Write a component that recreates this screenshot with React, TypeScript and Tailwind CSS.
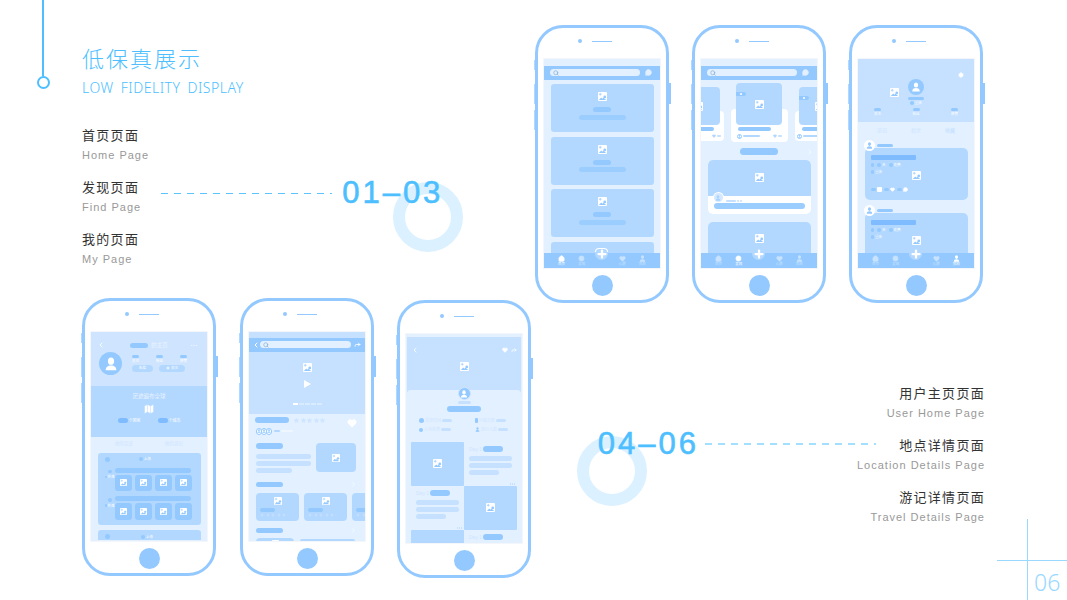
import * as React from 'react';
import { ChevronLeft, ChevronRight, Compass, Forward, Heart, House, Map as MapIcon, MessageCircle, Plus, Search, Settings, Star } from 'lucide-react';

type NodeProps = { readonly children?: React.ReactNode };

function ImageIcon({ size = 9 }: { readonly size?: number }) {
  return (
    <svg width={size} height={size} viewBox="0 0 10 10" className="shrink-0">
      <rect width="10" height="10" rx="1" fill="#fff" />
      <path d="M2.5 1v3M1 2.5h3" stroke="#a9d3ff" strokeWidth="1" />
      <path d="M1 9l2.5-3L5 7.5l1-1.5 3 3z" fill="#93c9ff" />
      <circle cx="7.5" cy="5.5" r="1.5" fill="#93c9ff" />
    </svg>
  );
}

function Person({ size = 10, color = '#fff' }: { readonly size?: number; readonly color?: string }) {
  return (
    <svg width={size} height={size} viewBox="0 0 10 10" className="shrink-0">
      <ellipse cx="5" cy="3" rx="2.2" ry="2.6" fill={color} />
      <path d="M1.2 9.5c0-2.500 1.500-3.500 3.800-3.500s3.800 1 3.800 3.500z" fill={color} />
    </svg>
  );
}

function Stars({ color, size = 5 }: { readonly color: string; readonly size?: number }) {
  return (
    <div className="flex gap-[1.5px]">
      {[0, 1, 2, 3, 4].map(i => (
        <Star key={i} size={size} color={color} fill={color} />
      ))}
    </div>
  );
}

function SearchPill({ className }: { readonly className: string }) {
  return (
    <div className={`flex h-[7px] items-center rounded-full bg-[#e3f0ff] pl-[3px] ${className}`}>
      <Search size={6} color="#7fa9d0" strokeWidth={2.5} />
    </div>
  );
}

function TabBar({ active, bracket }: { readonly active: number; readonly bracket?: boolean }) {
  const tabs = [
    { label: '首页', icon: <House size={7} fill="currentColor" strokeWidth={2} /> },
    { label: '发现', icon: <Compass size={7} fill="currentColor" strokeWidth={1} stroke="#93c9ff" /> },
    { label: '', icon: null },
    { label: '心愿', icon: <Heart size={7} fill="currentColor" strokeWidth={1} /> },
    { label: '我的', icon: <Person size={7} color="currentColor" /> },
  ];
  return (
    <div className="relative flex h-[15px] shrink-0 bg-[#93c9ff] px-[7.5px] pt-[2px]">
      {tabs.map((tab, i) => (
        <div key={tab.label || 'plus'} className={`flex w-[20.2px] flex-col items-center ${active === i ? 'text-white' : 'text-[#c9e3ff]'}`}>
          {tab.icon}
          <span className="text-[3.5px] leading-[5px]">{tab.label}</span>
        </div>
      ))}
      <div className="absolute top-[-6px] left-[51px] flex h-[13px] w-[13px] items-center justify-center rounded-full bg-[#b3d8ff]">
        <Plus size={12} color="#fff" strokeWidth={4.5} />
      </div>
      {bracket && <div className="absolute top-[-5.5px] left-[51px] h-[4px] w-[13px] rounded-t-[4px] border-x border-t border-white" />}
    </div>
  );
}

function Screen({ children, tabs, bracket }: NodeProps & { readonly tabs?: number; readonly bracket?: boolean }) {
  return (
    <div className="mt-[15px] flex h-[211px] w-[118px] flex-col overflow-hidden border border-[#f3f7fb] bg-[#e3f0ff]">
      <div className="min-h-0 flex-1 overflow-hidden">{children}</div>
      {tabs !== undefined && <TabBar active={tabs} bracket={bracket} />}
    </div>
  );
}

function Phone({ children, className = '' }: NodeProps & { readonly className?: string }) {
  return (
    <div className={`relative flex h-[278px] w-[134px] shrink-0 flex-col items-center rounded-[28px] border-[3px] border-[#93c9ff] bg-white ${className}`}>
      <div className="absolute top-[32px] left-[-4.5px] h-[10px] w-[1.5px] bg-[#b3d8ff]" />
      <div className="absolute top-[56px] left-[-4.5px] h-[20px] w-[1.5px] bg-[#b3d8ff]" />
      <div className="absolute top-[82px] left-[-4.5px] h-[20px] w-[1.5px] bg-[#b3d8ff]" />
      <div className="absolute top-[55px] right-[-4.5px] h-[21px] w-[1.5px] bg-[#93c9ff]" />
      <div className="relative mt-[11px] flex h-[4px] items-center">
        <div className="absolute left-[-14px] h-[4px] w-[4px] rounded-full bg-[#93c9ff]" />
        <div className="h-px w-[20px] bg-[#93c9ff]" />
      </div>
      {children}
      <div className="mt-[5.5px] h-[21px] w-[21px] rounded-full bg-[#93c9ff]" />
    </div>
  );
}

function HomeCard() {
  return (
    <div className="flex h-[48px] w-[103px] shrink-0 flex-col items-center rounded-[3px] bg-[#b3d8ff] pt-[8px]">
      <ImageIcon />
      <div className="mt-[6px] h-[5px] w-[18px] rounded-full bg-[#93c9ff]" />
      <div className="mt-[2.5px] h-[5px] w-[47px] rounded-full bg-[#9ccdff]" />
    </div>
  );
}

function HomeScreen() {
  return (
    <Screen tabs={0} bracket>
      <div className="h-[7px]" />
      <div className="flex h-[13.5px] items-center gap-[5px] bg-[#93c9ff] pl-[6px]">
        <SearchPill className="w-[90px]" />
        <MessageCircle size={7} color="#e3f0ff" fill="#e3f0ff" />
      </div>
      <div className="flex flex-col items-center gap-[4.5px] pt-[4.5px]">
        <HomeCard />
        <HomeCard />
        <HomeCard />
        <HomeCard />
      </div>
    </Screen>
  );
}

function SpotCard({ wide }: { readonly wide?: boolean }) {
  return (
    <div className={`relative flex shrink-0 flex-col items-center rounded-[4px] ${wide ? 'h-[59px] w-[57px]' : 'mt-[4px] h-[54px] w-[50px]'}`}>
      <div className={`absolute inset-x-0 bottom-0 rounded-[4px] bg-white ${wide ? 'top-[26px]' : 'top-[24px]'}`} />
      <div className={`relative flex items-center justify-center rounded-[4px] bg-[#b3d8ff] ${wide ? 'h-[42px] w-[46px]' : 'h-[38px] w-[42px]'}`}>
        <ImageIcon />
        <div className="absolute top-[9px] left-0 flex h-[4px] w-[10px] items-center justify-center rounded-r-full bg-[#93c9ff]">
          <div className="h-[2px] w-[2px] rounded-full bg-white" />
        </div>
      </div>
      <div className="relative mt-[2px] ml-[7px] h-[4px] w-[33px] self-start rounded-full bg-[#93c9ff]" />
      <div className="relative mt-[2.5px] flex w-[45px] items-center">
        <div className="flex h-[5px] w-[5px] items-center justify-center rounded-full border-[0.5px] border-[#93c9ff]">
          <Person size={3} color="#93c9ff" />
        </div>
        <div className="ml-[1px] h-[2px] w-[17px] rounded-full bg-[#b3d8ff]" />
        <Heart size={4} color="#b3d8ff" fill="#b3d8ff" className="ml-auto" />
        <div className="ml-[1px] h-[2px] w-[4px] rounded-full bg-[#c5e1ff]" />
      </div>
    </div>
  );
}

function FindScreen() {
  return (
    <Screen tabs={1}>
      <div className="h-[7px]" />
      <div className="flex h-[13.5px] items-center gap-[5px] bg-[#93c9ff] pl-[6px]">
        <SearchPill className="w-[90px]" />
        <MessageCircle size={7} color="#e3f0ff" fill="#e3f0ff" />
      </div>
      <div className="flex justify-center gap-[7px] pt-[3.5px]">
        <SpotCard />
        <SpotCard wide />
        <SpotCard />
      </div>
      <div className="relative mt-[6px] flex justify-center">
        <div className="h-[7px] w-[38px] rounded-full bg-[#93c9ff]" />
        <ChevronRight size={8} color="#fff" strokeWidth={2} className="absolute top-0 right-[3px]" />
      </div>
      <div className="mx-auto mt-[5px] h-[54px] w-[103px] overflow-hidden rounded-[5px] bg-white">
        <div className="flex h-[36px] items-start justify-center bg-[#b3d8ff] pt-[13px]">
          <ImageIcon />
        </div>
        <div className="relative px-[6px]">
          <div className="absolute top-[-4px] left-[5px] flex h-[11px] w-[11px] items-center justify-center rounded-full bg-white">
            <div className="flex h-[9px] w-[9px] items-center justify-center rounded-full bg-[#d4e9ff]">
              <Person size={6} color="#a9d3ff" />
            </div>
          </div>
          <div className="ml-[12px] flex h-[9px] items-center gap-[1px] pt-[1px]">
            <div className="h-[2px] w-[10px] rounded-full bg-[#c5e1ff]" />
            <div className="h-[2px] w-[2px] rounded-full bg-[#c5e1ff]" />
            <div className="h-[2px] w-[2px] rounded-full bg-[#c5e1ff]" />
          </div>
          <div className="mt-[-2px] h-[5.5px] rounded-full bg-[#9ccdff]" />
        </div>
      </div>
      <div className="mx-auto mt-[8px] flex h-[54px] w-[103px] justify-center rounded-[5px] bg-[#b3d8ff] pt-[12px]">
        <ImageIcon />
      </div>
    </Screen>
  );
}

function Tag({ text, wide }: { readonly text: string; readonly wide?: boolean }) {
  return (
    <div className="flex items-center gap-[1px]">
      <div className={`h-[3.5px] rounded-full bg-[#93c9ff] ${wide ? 'w-[4px]' : 'w-[3.5px]'}`} />
      {text && <span className="text-[3.5px] leading-[4px] text-white">{text}</span>}
    </div>
  );
}

function JournalCard({ withIcons }: { readonly withIcons?: boolean }) {
  return (
    <div className="relative mt-[-3px] shrink-0 pt-[3px]">
      <div className="relative z-10 ml-[6px] flex h-[11px] items-center gap-[2px]">
        <div className="flex h-[11px] w-[11px] items-center justify-center rounded-full bg-white">
          <Person size={7} color="#93c9ff" />
        </div>
        <div className="mb-[1px] h-[3px] w-[16px] rounded-full bg-[#93c9ff]" />
      </div>
      <div className="mx-auto mt-[-3px] flex h-[52px] w-[103px] flex-col rounded-[5px] bg-[#b3d8ff] px-[6px] pt-[7px]">
        <div className="h-[5px] w-[45px] rounded-[1px] bg-[#7ebcff]" />
        <div className="mt-[3px] flex items-center gap-[3px]">
          <Tag text="" />
          <Tag text="天" wide />
          <Tag text="花费" wide />
        </div>
        <div className="mt-[3px] flex items-center justify-between pr-[52px]">
          <Tag text="重庆" />
        </div>
        <div className="mt-[-3px] ml-[41px] w-fit">
          <ImageIcon />
        </div>
        {withIcons && (
          <div className="mt-[7px] flex items-center gap-[1px]">
            <div className="h-[3px] w-[5px] rounded-full bg-[#93c9ff]" />
            <div className="h-[5px] w-[5px] rounded-[1px] bg-white" />
            <div className="ml-[1px] h-[3px] w-[5px] rounded-full bg-[#93c9ff]" />
            <Heart size={5} color="#fff" fill="#fff" />
            <div className="ml-[1px] h-[3px] w-[5px] rounded-full bg-[#93c9ff]" />
            <MessageCircle size={5} color="#fff" fill="#fff" />
          </div>
        )}
      </div>
    </div>
  );
}

function Stat({ label, className = 'w-[7px]' }: { readonly label: string; readonly className?: string }) {
  return (
    <div className="flex flex-col items-center">
      <div className={`h-[3px] rounded-full bg-[#93c9ff] ${className}`} />
      <span className="mt-[1px] text-[3.5px] leading-[4px] text-white">{label}</span>
    </div>
  );
}

function MyScreen() {
  return (
    <Screen tabs={4}>
      <div className="relative flex h-[63px] flex-col items-center bg-[#c5e1ff] pt-[20px]">
        <Settings size={6} color="#fff" fill="#fff" className="absolute top-[13px] right-[10px]" />
        <div className="absolute top-[29px] left-[32px]">
          <ImageIcon />
        </div>
        <div className="flex h-[16px] w-[16px] items-center justify-center rounded-full bg-[#93c9ff]">
          <Person size={10} />
        </div>
        <div className="mt-[2px] h-[3px] w-[16px] rounded-full bg-[#93c9ff]" />
        <div className="mt-[1px]">
          <Tag text="重庆" />
        </div>
        <div className="mt-[3px] flex w-[84px] justify-between">
          <Stat label="关注" />
          <Stat label="粉丝" />
          <Stat label="获赞" />
        </div>
      </div>
      <div className="flex h-[18px] items-center justify-center gap-[24px] text-[5px] text-[#cfe5ff]">
        <span>游记</span>
        <span>相关</span>
        <span className="text-[#bcdcff]">收藏</span>
      </div>
      <JournalCard withIcons />
      <div className="h-[5px]" />
      <JournalCard />
    </Screen>
  );
}

function TimelineRow() {
  return (
    <div className="flex">
      <div className="flex w-[16px] shrink-0 flex-col items-end pt-[2px]">
        <div className="mr-[3px] h-[3.5px] w-[3.5px] rounded-full bg-[#93c9ff]" />
        <div className="mt-[2px] flex items-center gap-[0.5px]">
          <div className="h-[2.5px] w-[2.5px] rounded-full bg-[#93c9ff]" />
          <span className="text-[3.5px] leading-[4px] text-white">外滩</span>
        </div>
      </div>
      <div className="ml-[0.5px] flex flex-col gap-[2px]">
        <div className="h-[5px] w-[76px] rounded-full bg-[#93c9ff]" />
        <div className="flex gap-[3px]">
          {[0, 1, 2, 3].map(i => (
            <div key={i} className="flex h-[16.5px] w-[17px] items-center justify-center rounded-[3px] bg-[#93c9ff]">
              <ImageIcon size={7} />
            </div>
          ))}
        </div>
      </div>
    </div>
  );
}

function UserScreen() {
  return (
    <Screen>
      <div className="h-[53.5px] bg-[#cfe5ff] px-[8px] pt-[9px]">
        <div className="relative flex h-[8px] items-center justify-center text-white">
          <ChevronLeft size={8} strokeWidth={2.5} className="absolute left-[-2px]" />
          <div className="h-[5px] w-[18px] rounded-full bg-[#93c9ff]" />
          <span className="ml-[3px] text-[5.5px] leading-[6px] text-[#e8f3ff]">的主页</span>
          <span className="absolute right-[1px] text-[6px] leading-[4px] font-bold tracking-[0.5px]">···</span>
        </div>
        <div className="mt-[3px] flex items-center">
          <div className="flex h-[23px] w-[23px] items-center justify-center rounded-full bg-[#93c9ff]">
            <Person size={14} />
          </div>
          <div className="ml-[10px] flex flex-col gap-[1.5px]">
            <div className="flex w-[55px] justify-between">
              <Stat label="关注" />
              <Stat label="粉丝" />
              <Stat label="获赞" />
            </div>
            <div className="flex gap-[6px] text-[3.5px] text-white">
              <div className="flex h-[7px] w-[21px] items-center justify-center rounded-full bg-[#b3d8ff]">私信</div>
              <div className="flex h-[7px] w-[26px] items-center justify-center gap-[1px] rounded-full bg-[#b3d8ff]">
                <Plus size={4} strokeWidth={5} />
                关注
              </div>
            </div>
          </div>
        </div>
      </div>
      <div className="flex h-[51px] flex-col items-center bg-[#b3d8ff] pt-[6px]">
        <span className="text-[5.5px] leading-[8px] text-[#e8f3ff]">足迹遍布全球</span>
        <MapIcon size={12} color="#b3d8ff" fill="#fff" strokeWidth={1} className="mt-[3px]" />
        <div className="mt-[3px] flex gap-[17px] text-[4px] leading-[5px] text-white">
          <div className="flex items-center gap-[1px]">
            <div className="h-[5px] w-[10px] rounded-full bg-[#7ebcff]" />
            个国家
          </div>
          <div className="flex items-center gap-[1px]">
            <div className="h-[5px] w-[10px] rounded-full bg-[#7ebcff]" />
            个城市
          </div>
        </div>
      </div>
      <div className="flex h-[16px] items-center justify-center gap-[32px] text-[4.5px] text-[#cfe5ff]">
        <span>她的足迹</span>
        <span>她的游记</span>
      </div>
      <div className="mx-auto flex h-[72px] w-[103px] flex-col gap-[2px] rounded-[3px] bg-[#b3d8ff] pr-[5px] pl-[1px]">
        <div className="relative flex h-[13px] items-center justify-center pr-[4px]">
          <div className="absolute left-[6px] h-[5px] w-[5px] rounded-full bg-[#93c9ff]" />
          <Tag text="上海" />
        </div>
        <TimelineRow />
        <div className="h-px" />
        <TimelineRow />
      </div>
      <div className="relative mx-auto mt-[5px] flex h-[10.5px] w-[103px] justify-center rounded-t-[3px] bg-[#b3d8ff] pt-[4px] pr-[4px]">
        <div className="absolute top-[4px] left-[7px] h-[5px] w-[5px] rounded-full bg-[#93c9ff]" />
        <Tag text="上海" />
      </div>
    </Screen>
  );
}

function ThumbCard() {
  return (
    <div className="flex h-[28px] w-[43px] shrink-0 flex-col rounded-[4px] bg-[#b3d8ff] pt-[4px] pl-[4px]">
      <div className="ml-[14px]">
        <ImageIcon size={8} />
      </div>
      <div className="mt-[3px] h-[4px] w-[15px] rounded-full bg-[#93c9ff]" />
      <div className="mt-[1.5px]">
        <Stars color="#c5e1ff" size={4} />
      </div>
    </div>
  );
}

function Section({ className }: { readonly className: string }) {
  return (
    <div className={`flex items-center justify-between pr-[8px] pl-[7px] ${className}`}>
      <div className="h-[5.5px] w-[27px] rounded-full bg-[#93c9ff]" />
      <ChevronRight size={7} color="#fff" strokeWidth={2} />
    </div>
  );
}

function PlaceScreen() {
  return (
    <Screen>
      <div className="h-[6px] bg-[#c5e1ff]" />
      <div className="flex h-[13.5px] items-center bg-[#93c9ff] px-[3px]">
        <ChevronLeft size={8} color="#fff" strokeWidth={3} />
        <SearchPill className="w-[91px]" />
        <Forward size={7} color="#fff" strokeWidth={3} className="ml-[3px]" />
      </div>
      <div className="flex h-[62px] flex-col items-center bg-[#c5e1ff] pt-[11px]">
        <ImageIcon />
        <svg width="7" height="8" viewBox="0 0 7 8" className="mt-[8px]">
          <path d="M0 0l7 4-7 4z" fill="#fff" />
        </svg>
        <div className="mt-[15px] flex gap-[1px]">
          <div className="h-[2px] w-[5px] bg-white" />
          <div className="h-[2px] w-[5px] bg-[#d9ebff]" />
          <div className="h-[2px] w-[5px] bg-[#d9ebff]" />
          <div className="h-[2px] w-[5px] bg-[#d9ebff]" />
          <div className="h-[2px] w-[5px] bg-[#d9ebff]" />
        </div>
      </div>
      <div className="relative flex items-center pt-[3.5px] pl-[6px]">
        <div className="h-[6px] w-[34px] rounded-full bg-[#93c9ff]" />
        <div className="ml-[5px]">
          <Stars color="#cfe5ff" />
        </div>
        <Heart size={10} color="#fff" fill="#fff" className="absolute top-[4px] right-[8px]" />
      </div>
      <div className="mt-[4.5px] ml-[7px] flex h-[7px] items-center">
        {[0, 1, 2].map(i => (
          <div key={i} className="mr-[-1px] flex h-[7px] w-[6px] items-center justify-center rounded-full border-[0.5px] border-[#93c9ff] bg-white">
            <Person size={4} color="#93c9ff" />
          </div>
        ))}
        <div className="ml-[3px] h-[2px] w-[6px] rounded-full bg-[#b3d8ff]" />
        <div className="ml-[1px] h-[2px] w-[12px] rounded-full bg-[#eef6ff]" />
      </div>
      <div className="mt-[8.5px] flex gap-[5px] pl-[7px]">
        <div className="flex w-[55px] flex-col">
          <div className="h-[5.5px] w-[27px] rounded-full bg-[#93c9ff]" />
          <div className="mt-[5.5px] h-[4.5px] rounded-full bg-[#c5e1ff]" />
          <div className="mt-[2.5px] h-[4.5px] rounded-full bg-[#c5e1ff]" />
          <div className="mt-[2.5px] h-[4.5px] w-[36px] rounded-full bg-[#c5e1ff]" />
        </div>
        <div className="flex h-[29px] w-[40px] items-center justify-center rounded-[4px] bg-[#b3d8ff]">
          <ImageIcon size={8} />
        </div>
      </div>
      <Section className="mt-[8.5px]" />
      <div className="mt-[4.5px] flex gap-[5px] pl-[7px]">
        <ThumbCard />
        <ThumbCard />
        <ThumbCard />
      </div>
      <Section className="mt-[6.5px]" />
      <div className="mt-[4px] flex gap-[6px] pl-[7px]">
        <div className="flex h-[14px] w-[38px] shrink-0 justify-center rounded-[4px] bg-[#b3d8ff] pt-[2px]">
          <ImageIcon size={7} />
        </div>
        <div className="mt-[1px] h-[4px] w-[55px] rounded-full bg-[#b3d8ff]" />
      </div>
    </Screen>
  );
}

function InfoItem({ label, icon }: { readonly label: string; readonly icon: React.ReactNode }) {
  return (
    <div className="flex items-center gap-[1px]">
      {icon}
      <span className="text-[4px] leading-[5px] text-[#cfe5ff]">{label}</span>
      <div className="h-[2.5px] w-[10px] rounded-full bg-[#c5e1ff]" />
    </div>
  );
}

function DayText({ dots }: { readonly dots?: boolean }) {
  return (
    <div className="relative flex h-[44px] w-[53px] shrink-0 flex-col px-[5px] pt-[4px]">
      <div className="flex items-center gap-[1px]">
        <span className="text-[5px] leading-[6px] text-[#cfe5ff]">Day 1</span>
        <div className="h-[6px] w-[20px] rounded-full bg-[#93c9ff]" />
      </div>
      <div className="mt-[4.5px] h-[4.5px] rounded-full bg-[#c5e1ff]" />
      <div className="mt-[2.5px] h-[4.5px] rounded-full bg-[#c5e1ff]" />
      <div className="mt-[2.5px] h-[4.5px] w-[30px] rounded-full bg-[#c5e1ff]" />
      {dots && (
        <div className="absolute right-[2px] bottom-[1px] flex gap-[0.5px]">
          <div className="h-[1.5px] w-[1.5px] bg-[#c5e1ff]" />
          <div className="h-[1.5px] w-[1.5px] bg-[#c5e1ff]" />
          <div className="h-[1.5px] w-[1.5px] bg-[#c5e1ff]" />
        </div>
      )}
    </div>
  );
}

function DayImage() {
  return (
    <div className="flex h-[44px] w-[53px] shrink-0 items-center justify-center rounded-[1px] bg-[#b3d8ff]">
      <ImageIcon />
    </div>
  );
}

function TravelScreen() {
  return (
    <Screen>
      <div className="mx-px mt-[3px] flex h-[56px] flex-col bg-[#c5e1ff] px-[4px] pt-[10px]">
        <div className="flex h-[6px] items-center text-white">
          <ChevronLeft size={8} strokeWidth={2.5} />
          <Heart size={6} fill="#fff" className="ml-auto" />
          <Forward size={6} strokeWidth={3} className="ml-[3px]" />
        </div>
        <div className="mt-[9px] self-center">
          <ImageIcon />
        </div>
      </div>
      <div className="mx-px mt-[-3px] rounded-t-[4px] bg-[#e3f0ff]">
        <div className="flex flex-col items-center">
          <div className="mt-[-3px] flex h-[13px] w-[13px] items-center justify-center rounded-full border border-[#cfe5ff] bg-[#93c9ff]">
            <Person size={8} />
          </div>
          <div className="mt-[1px] h-[3px] w-[13px] rounded-full bg-[#c5e1ff]" />
          <div className="mt-[1.5px] h-[6px] w-[34px] rounded-full bg-[#93c9ff]" />
        </div>
        <div className="mt-[6.5px] grid grid-cols-[51px_51px] gap-x-[5px] gap-y-[4px] pl-[12px]">
          <InfoItem label="发送时间" icon={<div className="h-[5px] w-[5px] rounded-full bg-[#93c9ff]" />} />
          <InfoItem label="行程天数" icon={<div className="h-[5px] w-[3px] rounded-[1px] bg-[#93c9ff]" />} />
          <InfoItem label="人均花费" icon={<div className="h-[4px] w-[4px] rounded-full bg-[#93c9ff]" />} />
          <InfoItem label="旅行人数" icon={<Person size={5} color="#93c9ff" />} />
        </div>
        <div className="mt-[9.5px] pl-[4px]">
          <div className="flex">
            <DayImage />
            <DayText dots />
          </div>
          <div className="flex">
            <DayText dots />
            <DayImage />
          </div>
          <div className="flex">
            <DayImage />
            <DayText />
          </div>
        </div>
      </div>
    </Screen>
  );
}

function PageLabel({ zh, en, right }: { readonly zh: string; readonly en: string; readonly right?: boolean }) {
  return (
    <div className={`flex flex-col ${right ? 'items-end' : 'items-start'}`}>
      <span className="text-[13px] leading-[20px] tracking-[1.3px] whitespace-nowrap text-[#333]">{zh}</span>
      <span className="mt-[0.5px] text-[11px] leading-[16px] tracking-[1px] whitespace-nowrap text-[#999]">{en}</span>
    </div>
  );
}

export default function App() {
  return (
    <div className="relative h-[600px] w-[1067px] overflow-hidden bg-white font-['Liberation_Sans','Noto_Sans_CJK_SC',sans-serif]">
      {/* Decoration */}
      <div className="absolute top-0 left-[42px] h-[76px] w-[2px] bg-[#4dbfff]" />
      <div className="absolute top-[76px] left-[36.5px] h-[13px] w-[13px] rounded-full border-2 border-[#4dbfff]" />
      <div className="absolute top-[182px] left-[393px] h-[70px] w-[70px] rounded-full border-[12px] border-[#dbf1ff]" />
      <div className="absolute top-[436px] left-[577px] h-[70px] w-[70px] rounded-full border-[12px] border-[#dbf1ff]" />
      <div className="absolute top-[519px] left-[1027px] h-[81px] w-px bg-[#9ad8ff]" />
      <div className="absolute top-[560px] left-[997px] h-px w-[70px] bg-[#9ad8ff]" />
      <span className="absolute top-[568px] left-[1034px] font-['Noto_Sans'] text-[23px] leading-[28px] font-light text-[#9ad8ff]">06</span>

      {/* Top row */}
      <div className="relative flex h-[298px]">
        <div className="w-[535px] shrink-0 pt-[47px] pl-[82px]">
          <h1 className="text-[22px] leading-[26px] font-light tracking-[2px] text-[#4dbfff]">低保真展示</h1>
          <p className="mt-[5px] font-['Noto_Sans'] text-[14px] leading-[19px] font-light tracking-[0.5px] text-[#4dbfff] [word-spacing:3px]">LOW FIDELITY DISPLAY</p>
          <div className="mt-[29px] flex flex-col gap-[15.5px]">
            <PageLabel zh="首页页面" en="Home Page" />
            <div className="flex items-start">
              <PageLabel zh="发现页面" en="Find Page" />
              <div className="ml-[20px] flex h-[30px] items-center gap-[10px]">
                <div className="h-px w-[171px] bg-[repeating-linear-gradient(90deg,#5cc5ff_0,#5cc5ff_7px,transparent_7px,transparent_13px)]" />
                <span className="text-[31px] leading-[30px] tracking-[3px] text-[#4dbfff] [-webkit-text-stroke:0.6px_#4dbfff]">01–03</span>
              </div>
            </div>
            <PageLabel zh="我的页面" en="My Page" />
          </div>
        </div>
        <div className="flex items-start gap-[23px] pt-[25px]">
          <Phone><HomeScreen /></Phone>
          <Phone><FindScreen /></Phone>
          <Phone><MyScreen /></Phone>
        </div>
      </div>

      {/* Bottom row */}
      <div className="relative flex h-[302px]">
        <div className="flex items-start pl-[82px]">
          <Phone className="mr-[24px]"><UserScreen /></Phone>
          <Phone className="mr-[23px]"><PlaceScreen /></Phone>
          <Phone className="mt-[2px]"><TravelScreen /></Phone>
        </div>
        <div className="flex flex-1 flex-col items-end gap-[15.5px] pt-[86px] pr-[82px]">
          <PageLabel zh="用户主页页面" en="User Home Page" right />
          <div className="flex items-start">
            <div className="relative z-10 mt-[-7px] mr-[-19px] flex h-[30px] items-center gap-[6px]">
              <span className="text-[31px] leading-[30px] tracking-[3px] text-[#4dbfff] [-webkit-text-stroke:0.6px_#4dbfff]">04–06</span>
              <div className="h-[1.5px] w-[171px] bg-[repeating-linear-gradient(90deg,#a3e0ff_0,#a3e0ff_7px,transparent_7px,transparent_13px)]" />
            </div>
            <PageLabel zh="地点详情页面" en="Location Details Page" right />
          </div>
          <PageLabel zh="游记详情页面" en="Travel Details Page" right />
        </div>
      </div>
    </div>
  );
}
